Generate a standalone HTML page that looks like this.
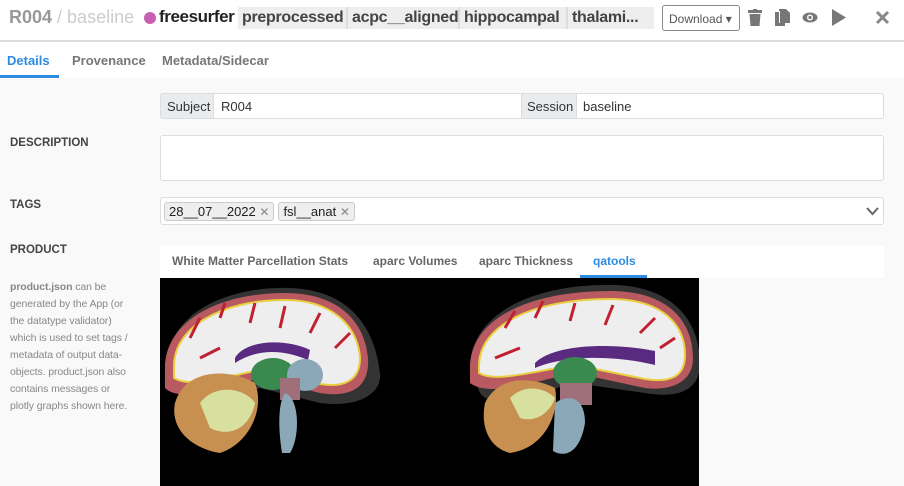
<!DOCTYPE html>
<html><head><meta charset="utf-8"><style>
*{box-sizing:border-box;margin:0;padding:0}
body{width:904px;height:486px;overflow:hidden;background:#f9f9f9;font-family:"Liberation Sans",sans-serif;position:relative;color:#333}
.hdr{position:absolute;left:0;top:0;width:904px;height:42px;background:#fff;border-bottom:2px solid #ddd}
.abs{position:absolute;white-space:nowrap}
.tabs{position:absolute;left:0;top:42px;width:904px;height:36px;background:#fff}
.lbl{position:absolute;left:10px;font-size:11.5px;font-weight:bold;color:#444}
.box{position:absolute;background:#fff;border:1px solid #ddd;border-radius:3px}
.tag{display:inline-block;background:#eee;border:1px solid #ccc;border-radius:3px;font-size:13px;padding:1px 4px;margin-right:4px;color:#222}
.tag i{font-style:normal;color:#888;font-size:12px}
.pill{position:absolute;top:7px;height:22px;background:#eee;padding:2px 0 0 4px;font-size:16px;font-weight:bold;color:#444;border-left:2px solid #ddd;letter-spacing:-0.3px;overflow:hidden;white-space:nowrap}
</style></head><body>
<div class="hdr">
 <div class="abs" style="left:9px;top:7px;font-size:18px;font-weight:bold;color:#999">R004 <span style="color:#ccc;font-weight:normal">/ baseline</span></div>
 <div class="abs" style="left:144px;top:12px;width:12px;height:12px;border-radius:50%;background:#c85fb0"></div>
 <div class="abs" style="left:159px;top:7px;font-size:17px;font-weight:bold;color:#222;letter-spacing:-0.4px">freesurfer</div>
 <div class="pill" style="left:238px;width:108px;border-left:0">preprocessed</div>
 <div class="pill" style="left:346px;width:112px">acpc__aligned</div>
 <div class="pill" style="left:458px;width:108px">hippocampal</div>
 <div class="pill" style="left:566px;width:88px">thalami...</div>
 <div class="abs" style="left:662px;top:5px;width:78px;height:26px;border:1px solid #888;border-radius:3px;font-size:12px;color:#555;padding:6px 0 0 6px">Download ▾</div>
 <svg class="abs" style="left:748px;top:9px" width="14" height="17" viewBox="0 0 14 17"><rect x="0" y="1" width="14" height="3" fill="#777"/><rect x="5" y="0" width="4" height="2" fill="#777"/><path d="M1.5 5h11l-1 12h-9z" fill="#777"/></svg>
 <svg class="abs" style="left:775px;top:9px" width="15" height="17" viewBox="0 0 15 17"><rect x="0" y="3" width="10" height="14" fill="#777"/><path d="M4 0h7l4 4v10H4z" fill="#777"/><rect x="4" y="2" width="1" height="12" fill="#fff"/></svg>
 <svg class="abs" style="left:802px;top:12px" width="16" height="11" viewBox="0 0 16 11"><ellipse cx="8" cy="5.5" rx="7.5" ry="5" fill="#777"/><circle cx="8" cy="5.5" r="3" fill="#fff"/><circle cx="8" cy="5.5" r="1.6" fill="#777"/></svg>
 <svg class="abs" style="left:832px;top:9px" width="14" height="17" viewBox="0 0 14 17"><path d="M0 0L14 8.5 0 17z" fill="#777"/></svg>
 <svg class="abs" style="left:875px;top:10px" width="15" height="15" viewBox="0 0 15 15"><path d="M2 2L13 13M13 2L2 13" stroke="#888" stroke-width="3"/></svg>
</div>
<div class="tabs">
 <div class="abs" style="left:7px;top:11px;font-size:13px;font-weight:bold;color:#2d8ce0">Details</div>
 <div class="abs" style="left:0;top:33px;width:59px;height:3px;background:#2d8ce0"></div>
 <div class="abs" style="left:72px;top:11px;font-size:13px;font-weight:bold;color:#777">Provenance</div>
 <div class="abs" style="left:162px;top:11px;font-size:13px;font-weight:bold;color:#777">Metadata/Sidecar</div>
</div>
<div class="box" style="left:160px;top:93px;width:724px;height:26px;overflow:hidden">
 <div class="abs" style="left:0;top:0;width:53px;height:26px;background:#e9ecef;border-right:1px solid #ddd;font-size:13px;padding:5px 0 0 6px">Subject</div>
 <div class="abs" style="left:60px;top:5px;font-size:13px">R004</div>
 <div class="abs" style="left:360px;top:0;width:56px;height:26px;background:#e9ecef;border-left:1px solid #ddd;border-right:1px solid #ddd;font-size:13px;padding:5px 0 0 5px">Session</div>
 <div class="abs" style="left:422px;top:5px;font-size:13px">baseline</div>
</div>
<div class="lbl" style="top:137px">DESCRIPTION</div>
<div class="box" style="left:160px;top:135px;width:724px;height:46px"></div>
<div class="lbl" style="top:199px">TAGS</div>
<div class="box" style="left:160px;top:197px;width:724px;height:28px;padding:4px 0 0 3px">
 <span class="tag">28__07__2022 <i>✕</i></span><span class="tag">fsl__anat <i>✕</i></span>
 <svg class="abs" style="left:705px;top:9px" width="13" height="9" viewBox="0 0 13 9"><path d="M1 1l5.5 6L12 1" stroke="#666" stroke-width="2" fill="none"/></svg>
</div>
<div class="lbl" style="top:244px">PRODUCT</div>
<div class="abs" style="left:10px;top:279px;font-size:10.5px;line-height:17px;color:#888;white-space:normal;width:126px;letter-spacing:-0.1px"><b>product.json</b> can be generated by the App (or the datatype validator) which is used to set tags / metadata of output data-objects. product.json also contains messages or plotly graphs shown here.</div>
<div class="abs" style="left:160px;top:246px;width:724px;height:32px;background:#fff;font-size:12px;font-weight:bold;color:#666">
 <span class="abs" style="left:12px;top:8px">White Matter Parcellation Stats</span>
 <span class="abs" style="left:213px;top:8px">aparc Volumes</span>
 <span class="abs" style="left:319px;top:8px">aparc Thickness</span>
 <span class="abs" style="left:433px;top:8px;color:#2d8ce0">qatools</span>
 <div class="abs" style="left:420px;top:29px;width:67px;height:3px;background:#2d8ce0"></div>
</div>
<svg class="abs" style="left:160px;top:278px" width="539" height="208" viewBox="0 0 539 208">
<rect width="539" height="208" fill="#000"/>
<g>
 <path d="M8 90C5 40 60 8 130 10C190 12 215 50 220 95C222 115 200 130 160 125L100 110C70 120 40 130 20 120z" fill="#333"/>
 <path d="M5 90C5 45 55 15 125 15C180 15 205 45 208 80C210 110 190 120 160 115L100 100C60 110 20 125 5 110z" fill="#b85a60"/>
 <path d="M14 88C14 50 60 22 125 22C172 22 198 48 200 80C200 102 185 110 160 106L100 92C60 100 30 110 14 100z" fill="#eee" stroke="#e8d040" stroke-width="2"/>
 <path d="M30 60L40 40M60 40L65 25M90 45L95 25M120 50L125 28M150 55L160 35M175 70L190 55M40 80L60 70" stroke="#c02030" stroke-width="3"/>
 <path d="M75 80C85 62 125 60 150 72L148 82C120 70 95 72 75 85z" fill="#5a2a80"/>
 <ellipse cx="113" cy="96" rx="22" ry="16" fill="#3a8a50"/>
 <ellipse cx="145" cy="97" rx="18" ry="16" fill="#8aa8b8"/>
 <rect x="120" y="100" width="20" height="22" fill="#a0707a"/>
 <path d="M15 125C25 90 70 90 95 105C105 130 90 165 60 175C30 170 10 150 15 125z" fill="#c89050"/>
 <path d="M40 125C55 105 85 110 95 125C90 150 70 160 50 150z" fill="#d8e0a0"/>
 <path d="M125 115C140 120 140 160 130 175L122 175C118 150 118 125 125 115z" fill="#8aa8b8"/>
</g>
<g transform="translate(305,-5)">
 <path d="M5 95C5 40 70 10 150 12C210 14 235 50 235 90C235 120 210 125 180 120L110 110C70 120 30 140 15 120z" fill="#333"/>
 <path d="M5 95C5 45 65 18 145 18C205 18 228 50 228 85C228 110 205 118 180 115L110 100C70 108 25 125 5 110z" fill="#b85a60"/>
 <path d="M14 93C14 52 68 26 145 26C198 26 220 52 220 82C220 104 205 110 180 106L110 92C70 98 30 110 14 100z" fill="#eee" stroke="#e8d040" stroke-width="2"/>
 <path d="M40 55L50 38M70 45L78 28M105 48L110 30M140 52L148 32M175 60L190 45M195 75L210 65M30 85L55 75" stroke="#c02030" stroke-width="3"/>
 <path d="M70 90C90 70 150 70 190 78L190 92C150 82 100 82 70 95z" fill="#5a2a80"/>
 <ellipse cx="110" cy="100" rx="22" ry="16" fill="#3a8a50"/>
 <rect x="95" y="110" width="32" height="22" fill="#a0707a"/>
 <path d="M20 130C35 100 70 105 90 115C95 140 80 175 45 180C25 175 15 155 20 130z" fill="#c89050"/>
 <path d="M45 125C60 110 80 115 90 125C85 140 70 150 55 145z" fill="#d8e0a0"/>
 <path d="M90 130C105 120 120 125 120 150C115 180 100 185 88 178z" fill="#8aa8b8"/>
</g>
</svg>
</body></html>
